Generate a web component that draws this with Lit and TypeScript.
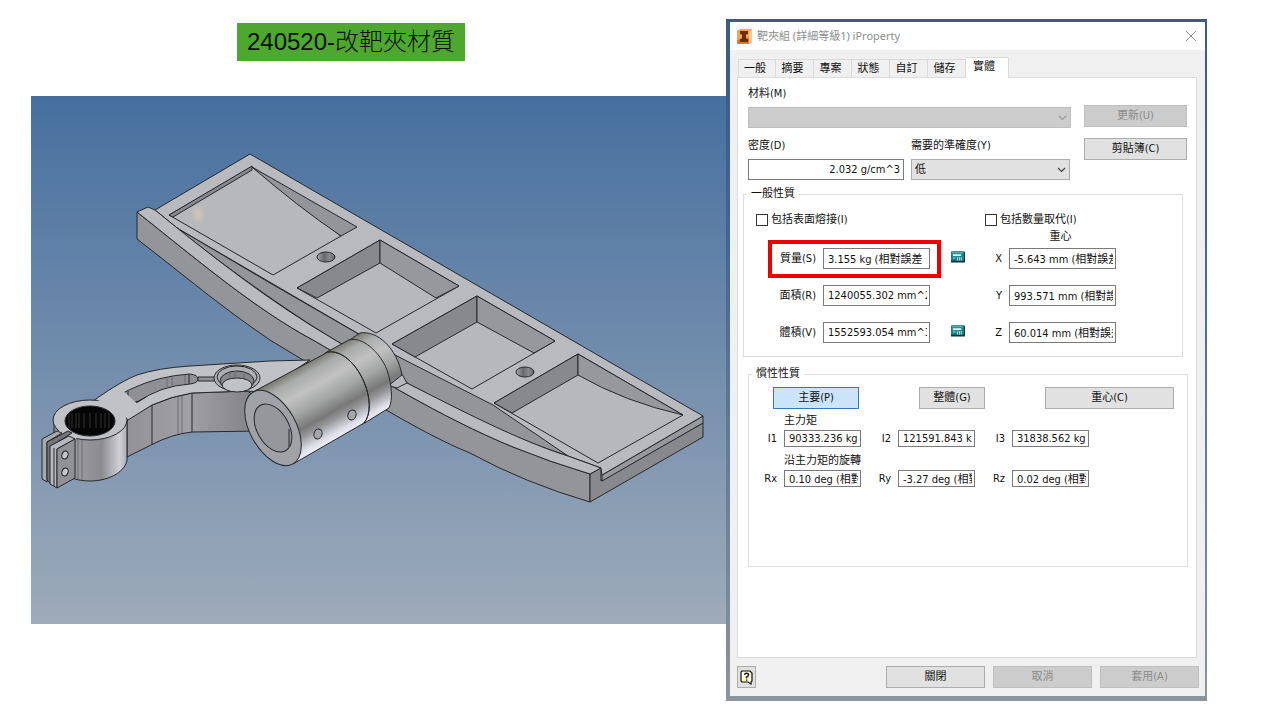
import { LitElement, html, css, svg } from "lit";
import { customElement, property } from "lit/decorators.js";

@customElement("part-drawing")
class PartDrawing extends LitElement {
  static styles = css`
    :host { display: block; }
    .view { display: block; width: 100%; height: auto; }
    .edge { stroke: #26282b; stroke-width: 1; stroke-linejoin: round; }
    .line { fill: none; stroke: #26282b; stroke-width: 1; }
    .faint { fill: none; stroke: #6c6c72; stroke-width: 1; }
    .top { fill: #b9babf; }
    .floor { fill: #b7b8bc; }
    .side { fill: #949599; }
    .wall { fill: #88898d; }
    .sideRight { fill: #97989b; }
  `;

  private plate() {
    return svg`
      <path class="side edge" d="M137 212 C195 258 255 309 313 340 C370 373 440 417 513 447 Q550 462 590 474 V502 Q525 483 470 453 C420 433 350 388 303 360 L270 340 C220 306 185 276 137 239Z"/>
      <path class="wall edge" d="M590 474 L601 468 V481 L703 423 V437 L590 502Z"/>
      <path class="sideRight edge" d="M602 475 L703 416 V423 L602 481Z"/>
      <path class="top edge" d="M155 210 L250 154 L703 416 L602 475 L601 468 L568 456 L177 228Z"/>
      <path class="side edge" d="M177 228 L270 283 L395 355 L493 405 L568 456 Q500 434 407 383 L335 340 C285 310 220 263 177 228Z"/>
      <path class="top edge" d="M137 212 L148 207 L155 210 C210 255 270 302 335 340 L407 383 C460 410 520 441 568 456 L601 468 L590 474 Q550 462 513 447 C440 417 370 373 313 340 C255 309 195 258 137 212Z"/>

      <path class="floor edge" d="M169 215 L252 167 L341 236 L273 275Z"/>
      <path class="side edge" d="M252 167 L357 227 L341 236 Q297 206 252 167Z"/>
      <path class="wall edge" d="M169 215 L252 166 L252 170 L173 217Z"/>
      <ellipse cx="198" cy="214" rx="7" ry="10" fill="url(#shine)"/>

      <path class="floor edge" d="M297 288 L380 240 L459 286 L376 333Z"/>
      <path class="wall edge" d="M380 240 V263 L317 298 L297 288Z"/>
      <path class="sideRight edge" d="M380 240 L459 286 L436 298 L380 263Z"/>

      <path class="floor edge" d="M392 344 L477 296 L555 341 L472 389Z"/>
      <path class="wall edge" d="M477 296 V322 L415 357 L392 344Z"/>
      <path class="sideRight edge" d="M477 296 L555 341 L534 353 L477 322Z"/>

      <path class="floor edge" d="M494 403 L578 354 L683 415 L598 463Z"/>
      <path class="wall edge" d="M578 354 V375 L512 413 L494 403Z"/>
      <path class="sideRight edge" d="M578 354 L683 415 Q625 402 578 375Z"/>

      <ellipse class="edge" cx="326" cy="257" rx="9" ry="5" fill="url(#bore)"/>
      <ellipse class="edge" cx="525" cy="372" rx="9" ry="5" fill="url(#bore)"/>`;
  }

  private arm() {
    const grooves = [69, 72, 76, 79, 84, 90, 96, 101, 105, 109];
    return svg`
      <path class="edge" fill="url(#armSide)" d="M127 419 L152 405 Q172 396 192 393 L247 391 L262 400 V431 L192 432 Q172 434 151 445 L127 457Z"/>
      <path class="line" d="M152 405 V444 M192 393 V432"/>
      <path class="faint" d="M178 396 V434 M182 395 V433"/>
      <path class="edge" fill="#c1c2c5" d="M93 401 C106 392 120 382 137 375 Q158 368 190 366 L270 361 L310 360 L262 392 L247 391 L192 393 Q172 396 152 405 L120 425Z"/>

      <path class="edge" fill="#8f8f94" d="M117 401 C117 397 122 393 131 389 Q158 376 190 374 Q198 375 198 379 Q198 383 190 384 Q160 386 138 402 Q124 407 117 401Z"/>
      <path class="line" d="M128 391 V404 M189 374 V384 M128 404 Q139 402 146 397"/>
      <path class="faint" d="M167 378 V387 M172 377 V386 M185 375 V384"/>
      <path class="edge" fill="#929297" d="M198 377 H216 V381 H198Z"/>
      <ellipse class="edge" cx="237" cy="378" rx="23" ry="13" fill="#aeafb2"/>
      <ellipse class="line" cx="237" cy="377" rx="20" ry="11"/>
      <ellipse class="edge" cx="237" cy="381" rx="17" ry="10" fill="#85868a"/>
      <ellipse class="edge" cx="237" cy="385" rx="15" ry="7" fill="#c1c2c5"/>
      <path class="faint" d="M230 372 V378 M235 371 V377 M244 372 V378"/>

      <path class="edge" fill="url(#ring)" d="M54 420 V462 C58 475 75 481 90 481 C111 481 126 470 127 460 V419Z"/>
      <ellipse class="edge" cx="90" cy="420" rx="37" ry="20" fill="#c1c2c5"/>
      <path fill="#c1c2c5" d="M96 402 L120 388 L142 408 L126 418 L112 415Z"/>
      <path class="faint" d="M78 439 V479 M82 440 V480"/>
      <ellipse class="edge" cx="90" cy="421" rx="25" ry="15" fill="#060606"/>
      ${grooves.map((x) => svg`<path d=${`M${x} 413 V428`} stroke="#4e4e52" stroke-width="0.6"/>`)}

      <path fill="#c1c2c5" d="M50 437 L65 426 L77 438 L58 448Z"/>
      <path class="edge" fill="#a7a8ab" d="M42 439 L57 431 L62 433 L47 442 V482 L42 479Z"/>
      <path class="edge" fill="#737479" d="M47 442 L68 431 L72 433 L51 446 V484 L47 480Z"/>
      <path class="edge" fill="#b6b7ba" d="M50 446 L69 436 L75 439 L57 449 V488 L50 484Z"/>
      <path class="edge" fill="#909196" d="M57 449 L75 439 V478 L57 488Z"/>
      <path class="line" d="M54 448 V486"/>
      <ellipse class="edge" cx="65" cy="455" rx="3" ry="4" fill="#c5c6c9" transform="rotate(20 65 455)"/>
      <ellipse class="edge" cx="65" cy="472" rx="3" ry="4" fill="#c5c6c9" transform="rotate(20 65 472)"/>`;
  }

  private barrel() {
    return svg`
      <path class="edge" fill="#b7b8bb" d="M391 381 L402 374 L407 383 L397 388 L390 386Z"/>
      <path class="edge" fill="url(#tube)" d="M348 341 L360 333 C377 330 397 348 402 375 L388 386Z"/>
      <path class="edge" fill="url(#tube)" d="M325 353 L349 340 C362 336 380 352 387 370 C392 385 393 400 389 408 L363 424Z"/>
      <path class="edge" fill="url(#tube)" d="M253 392 L328 352 C341 350 356 363 364 382 C371 398 371 415 364 423 L293 464Z"/>
      <path class="line" stroke-width="2" d="M328 352 C341 350 356 363 364 382 C371 398 371 415 364 423"/>
      <ellipse class="edge" cx="273" cy="428" rx="41" ry="23" fill="#a1a2a6" transform="rotate(61 273 428)"/>
      <ellipse class="edge" cx="273" cy="428" rx="26" ry="16" fill="#96979b" transform="rotate(61 273 428)"/>
      <path class="line" d="M289 429 V447"/>
      <ellipse class="edge" cx="318" cy="434" rx="4" ry="5" fill="#a6a6aa" transform="rotate(20 318 434)"/>
      <ellipse class="edge" cx="352" cy="415" rx="4" ry="5" fill="#a6a6aa" transform="rotate(20 352 415)"/>`;
  }

  render() {
    return html`
      <svg class="view" viewBox="31 96 695 528" role="img" aria-label="CAD">
        <defs>
          <linearGradient id="sky" x1="0" y1="0" x2="0" y2="1">
            <stop offset="0" stop-color="#466f9f"/><stop offset="1" stop-color="#9eabba"/>
          </linearGradient>
          <radialGradient id="shine">
            <stop offset="0" stop-color="#d0c8b6"/><stop offset="1" stop-color="#b9babd"/>
          </radialGradient>
          <linearGradient id="bore">
            <stop offset="0" stop-color="#aaa"/><stop offset="0.4" stop-color="#66676b"/>
            <stop offset="0.7" stop-color="#8b8b8f"/><stop offset="1" stop-color="#626267"/>
          </linearGradient>
          <linearGradient id="armSide">
            <stop offset="0" stop-color="#929297"/><stop offset="0.45" stop-color="#a1a1a4"/><stop offset="1" stop-color="#7f7f84"/>
          </linearGradient>
          <linearGradient id="ring">
            <stop offset="0" stop-color="#87878b"/><stop offset="0.35" stop-color="#99999d"/>
            <stop offset="0.65" stop-color="#8b8b90"/><stop offset="0.9" stop-color="#d0d0d4"/><stop offset="1" stop-color="#aaaaaf"/>
          </linearGradient>
          <linearGradient id="tube" gradientUnits="userSpaceOnUse" x1="253" y1="392" x2="293" y2="464">
            <stop offset="0" stop-color="#77776f"/><stop offset="0.12" stop-color="#a9aaaa"/>
            <stop offset="0.3" stop-color="#c2c2c2"/><stop offset="0.5" stop-color="#a3a4a4"/>
            <stop offset="0.68" stop-color="#787878"/><stop offset="0.78" stop-color="#9a9a9e"/>
            <stop offset="0.92" stop-color="#dedee9"/><stop offset="1" stop-color="#f0f0fa"/>
          </linearGradient>
        </defs>
        <rect x="31" y="96" width="695" height="528" fill="url(#sky)"/>
        ${this.plate()} ${this.arm()} ${this.barrel()}
      </svg>`;
  }
}

const calculator = html`
  <svg class="calc" viewBox="0 0 15 12" aria-hidden="true">
    <rect x="0" y="0" width="15" height="12" rx="1" fill="#0b2f45"/>
    <rect x="0" y="0" width="14" height="10" rx="1" fill="#16828c"/>
    <rect x="1" y="1" width="12" height="1" fill="#6fc3c4"/>
    <rect x="2" y="3" width="9" height="2" fill="#d9f3ee"/>
    <path d="M2 7H5M7 6V10M9 6V10M11 6V10" stroke="#b5e2df" stroke-width="1"/>
  </svg>`;

const chevron = html`
  <svg class="chevron" viewBox="0 0 9 6" aria-hidden="true">
    <path d="M1 1L4.5 4.5L8 1" fill="none" stroke="currentColor" stroke-width="1.2"/>
  </svg>`;

@customElement("property-dialog")
class PropertyDialog extends LitElement {
  static styles = css`
    :host {
      display: flex;
      font: 11px/14px "DejaVu Sans Condensed", "Noto Sans CJK TC", sans-serif;
      color: #111;
    }
    * { box-sizing: border-box; }
    button, input, select { font: inherit; color: inherit; margin: 0; border-radius: 0; }
    .frame {
      flex: 1; min-width: 0; display: flex;
      padding: 3px 2px 5px 4px;
      background: linear-gradient(#3a5b82, #41658f 30%, #8c949e);
    }
    .window { flex: 1; min-width: 0; display: flex; flex-direction: column; background: #f0f0f0; }
    .titlebar {
      display: flex; align-items: center; gap: 5px; height: 28px;
      padding: 0 8px 0 7px; background: #fff; color: #8e8e8e;
    }
    .logo { width: 15px; height: 15px; }
    .caption { flex: 1; font: 11px/14px "Noto Sans", "Noto Sans CJK TC", sans-serif; margin: 0; }
    .close { display: flex; padding: 0; border: 0; background: none; }
    .closeIcon { width: 12px; height: 12px; }
    .tabs { display: flex; align-items: flex-end; padding: 7px 0 0 8px; }
    .tab {
      width: 38px; height: 18px; padding: 0 4px 0 0;
      border: 1px solid #dadada; border-left-width: 0; border-bottom: 0;
      background: #f0f0f0; white-space: nowrap;
    }
    .tab:first-child { border-left-width: 1px; }
    .tab.active { width: 43px; height: 21px; padding: 0 6px 3px 0; margin: 0 0 -1px; background: #fff; z-index: 1; }
    .panel {
      flex: 1; margin: 0 8px 0 7px; padding: 9px 13px 0 5px;
      border: 1px solid #dcdcdc; background: #fff;
    }
    .material { display: flex; gap: 13px; padding: 0 0 0 5px; margin-right: -4px; }
    .fields { flex: 1; display: flex; flex-direction: column; }
    .field { display: flex; flex-direction: column; gap: 6px; }
    .pair { display: grid; grid-template-columns: 156fr 159fr; gap: 7px; margin-top: 11px; padding-right: 1px; }
    .actions { width: 103px; display: flex; flex-direction: column; gap: 11px; padding-top: 18px; }
    .btn {
      height: 22px; padding: 0; border: 1px solid #adadad; background: #e1e1e1;
      display: flex; align-items: center; justify-content: center; white-space: nowrap;
    }
    .btn:disabled { background: #cccccc; border-color: #bfbfbf; color: #8b8b8b; }
    .btn.primary { background: #cce4f7; border-color: #3878b4; }
    .choice { position: relative; display: flex; }
    .select {
      flex: 1; height: 21px; padding: 0 3px; appearance: none;
      border: 1px solid #adadad; background: #e1e1e1; opacity: 1;
    }
    .select:disabled { background: #cccccc; border-color: #bfbfbf; }
    .chevron { position: absolute; right: 4px; top: 8px; width: 9px; height: 6px; color: #444; pointer-events: none; }
    .select:disabled + .chevron { color: #999; }
    .text { width: 100%; min-width: 0; height: 21px; padding: 0 2px 1px 4px; border: 1px solid #7a7a7a; background: #fff; }
    .text.right { text-align: right; padding-right: 3px; }
    .text.low { height: 17px; }
    .group { min-width: 0; margin: 7px 0 0; padding: 0 12px; border: 1px solid #dcdcdc; }
    .legend { padding: 0 4px; margin-left: -9px; line-height: 14px; }
    .general { padding: 12px 12px 13px; }
    .inertia { margin: 10px -5px 0 5px; padding: 6px 13px 79px 12px; }
    .checks { display: grid; grid-template-columns: 229px 1fr; }
    .check { display: flex; align-items: center; gap: 3px; white-space: nowrap; }
    .box { appearance: none; width: 12px; height: 12px; border: 1px solid #333; background: #fff; }
    .box:checked { background: #333; }
    .columns { display: flex; }
    .masses, .center { display: flex; flex-direction: column; gap: 16px; }
    .masses { width: 209px; padding-top: 21px; }
    .center { width: 151px; }
    .centerTitle { text-align: center; margin: 3px 0 -12px; padding-left: 40px; }
    .row { display: flex; align-items: center; gap: 21px; }
    .entry { position: relative; display: grid; grid-template-columns: 60px 107px; gap: 7px; align-items: center; text-align: right; }
    .center .entry { grid-template-columns: 37px 107px; }
    .mark::after { content: ""; position: absolute; inset: -8px -11px -9px 12px; border: 4px solid #ee0000; pointer-events: none; }
    .calc { width: 15px; height: 12px; margin-top: -4px; }
    .systems { display: flex; justify-content: space-between; padding-left: 12px; }
    .systems .btn:nth-child(1) { width: 86px; }
    .systems .btn:nth-child(2) { width: 66px; }
    .systems .btn:nth-child(3) { width: 129px; }
    .sub { margin: 5px 0 2px 23px; }
    .sub.next { margin-top: 7px; }
    .axes { display: flex; gap: 7px; }
    .axis { display: grid; grid-template-columns: 16px 77px; gap: 7px; align-items: center; text-align: right; }
    .axis.wide { grid-template-columns: 23px 77px; }
    .footer { display: flex; align-items: center; gap: 8px; padding: 8px 6px 8px 7px; }
    .footer .btn { width: 99px; }
    .footer .help { width: 19px; margin-right: auto; }
    .helpIcon { width: 13px; height: 15px; }
  `;

  @property({ attribute: false }) tabs = ["一般", "摘要", "專案", "狀態", "自訂", "儲存", "實體"];

  private entry(id: string, label: string, value: string, mark = false) {
    return html`<div class="entry ${mark ? "mark" : ""}">
      <label for=${id}>${label}</label><input class="text" id=${id} .value=${value} readonly>
    </div>`;
  }

  private axis(id: string, value: string, wide: boolean) {
    return html`<div class="axis ${wide ? "wide" : ""}">
      <label for=${id}>${id}</label><input class="text low" id=${id} .value=${value} readonly>
    </div>`;
  }

  render() {
    return html`
      <div class="frame"><section class="window">
        <header class="titlebar">
          <svg class="logo" viewBox="0 0 15 15" aria-hidden="true">
            <path d="M0 2L3 0H15V13L12 15H0Z" fill="#f3a64f"/>
            <path d="M0 11L15 8V13L12 15H0Z" fill="#e07b22"/>
            <path d="M12 3L15 0V13L12 15Z" fill="#f8c98e"/>
            <path d="M3 2H11V5L9 5.5V9.5L11 10V13H3V10L5 9.5V5.5L3 5Z" fill="#6b2c0a"/>
          </svg>
          <h1 class="caption">靶夾組 (詳細等級1) iProperty</h1>
          <button class="close" aria-label="關閉">
            <svg class="closeIcon" viewBox="0 0 12 12"><path d="M1 1L11 11M11 1L1 11" stroke="#8c8c8c" fill="none"/></svg>
          </button>
        </header>
        <nav class="tabs" role="tablist">
          ${this.tabs.map((t, i) => html`<button role="tab" class="tab ${i === 6 ? "active" : ""}">${t}</button>`)}
        </nav>
        <main class="panel">
          <div class="material">
            <div class="fields">
              <div class="field">
                <label for="material">材料(M)</label>
                <div class="choice"><select class="select" id="material" disabled></select>${chevron}</div>
              </div>
              <div class="pair">
                <div class="field"><label for="density">密度(D)</label>
                  <input class="text right" id="density" value="2.032 g/cm^3"></div>
                <div class="field"><label for="accuracy">需要的準確度(Y)</label>
                  <div class="choice"><select class="select" id="accuracy"><option>低</option></select>${chevron}</div></div>
              </div>
            </div>
            <div class="actions">
              <button class="btn" disabled>更新(U)</button>
              <button class="btn">剪貼簿(C)</button>
            </div>
          </div>
          <fieldset class="group general">
            <legend class="legend">一般性質</legend>
            <div class="checks">
              <label class="check"><input class="box" type="checkbox">包括表面熔接(I)</label>
              <label class="check"><input class="box" type="checkbox">包括數量取代(I)</label>
            </div>
            <div class="columns">
              <div class="masses">
                <div class="row">${this.entry("mass", "質量(S)", "3.155 kg (相對誤差", true)}${calculator}</div>
                <div class="row">${this.entry("area", "面積(R)", "1240055.302 mm^2")}</div>
                <div class="row">${this.entry("volume", "體積(V)", "1552593.054 mm^3")}${calculator}</div>
              </div>
              <div class="center">
                <div class="centerTitle">重心</div>
                ${this.entry("cx", "X", "-5.643 mm (相對誤差")}
                ${this.entry("cy", "Y", "993.571 mm (相對誤差")}
                ${this.entry("cz", "Z", "60.014 mm (相對誤差")}
              </div>
            </div>
          </fieldset>
          <fieldset class="group inertia">
            <legend class="legend">慣性性質</legend>
            <div class="systems">
              <button class="btn primary">主要(P)</button>
              <button class="btn">整體(G)</button>
              <button class="btn">重心(C)</button>
            </div>
            <div class="sub">主力矩</div>
            <div class="axes">
              ${this.axis("I1", "90333.236 kg", false)}${this.axis("I2", "121591.843 kg", true)}${this.axis("I3", "31838.562 kg", true)}
            </div>
            <div class="sub next">沿主力矩的旋轉</div>
            <div class="axes">
              ${this.axis("Rx", "0.10 deg (相對", false)}${this.axis("Ry", "-3.27 deg (相對", true)}${this.axis("Rz", "0.02 deg (相對", true)}
            </div>
          </fieldset>
        </main>
        <footer class="footer">
          <button class="btn help" aria-label="說明">
            <svg class="helpIcon" viewBox="0 0 13 15">
              <path d="M2 1H10L12 3V11L11 12V14L8 12H2L1 11V2Z" fill="#ffffc8" stroke="#111" stroke-width="1.2"/>
              <path d="M4.5 4.8Q4.8 3.2 6.5 3.2Q8.6 3.2 8.5 5Q8.4 6.2 6.6 7V8.4M6.6 9.4V10.8" fill="none" stroke="#15155a" stroke-width="1.5"/>
            </svg>
          </button>
          <button class="btn">關閉</button>
          <button class="btn" disabled>取消</button>
          <button class="btn" disabled>套用(A)</button>
        </footer>
      </section></div>`;
  }
}

@customElement("app-root")
class AppRoot extends LitElement {
  static styles = css`
    :host { display: block; background: #fff; }
    .slide {
      box-sizing: border-box; min-height: 100vh;
      display: grid; grid-template-columns: 695fr 481fr;
      padding: 19px 73px 19px 31px;
    }
    .left { display: flex; flex-direction: column; gap: 35px; padding-top: 4px; min-width: 0; }
    .heading {
      align-self: center; margin: 0 55px 0 0; padding: 0 10px;
      font: 300 24px/38px "Liberation Sans", "Noto Sans CJK TC", sans-serif;
      background: #4ea72e; color: #0a0f08; white-space: nowrap;
    }
  `;

  render() {
    return html`
      <div class="slide">
        <div class="left">
          <h2 class="heading">240520-改靶夾材質</h2>
          <part-drawing></part-drawing>
        </div>
        <property-dialog></property-dialog>
      </div>`;
  }
}
